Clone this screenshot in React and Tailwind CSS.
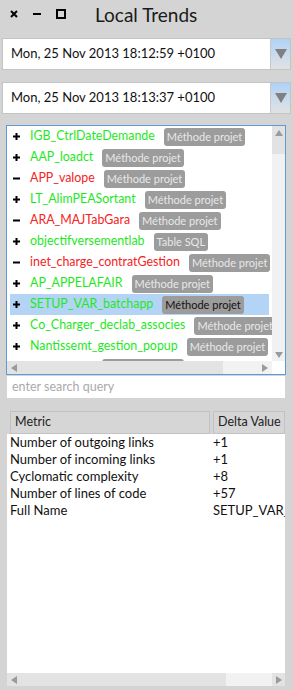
import React from "react";

const items = [
  { sign: "+", name: "IGB_CtrlDateDemande", tag: "Méthode projet" },
  { sign: "+", name: "AAP_loadct", tag: "Méthode projet" },
  { sign: "-", name: "APP_valope", tag: "Méthode projet" },
  { sign: "+", name: "LT_AlimPEASortant", tag: "Méthode projet" },
  { sign: "-", name: "ARA_MAJTabGara", tag: "Méthode projet" },
  { sign: "+", name: "objectifversementlab", tag: "Table SQL" },
  { sign: "-", name: "inet_charge_contratGestion", tag: "Méthode projet" },
  { sign: "+", name: "AP_APPELAFAIR", tag: "Méthode projet" },
  { sign: "+", name: "SETUP_VAR_batchapp", tag: "Méthode projet", selected: true },
  { sign: "+", name: "Co_Charger_declab_associes", tag: "Méthode projet" },
  { sign: "+", name: "Nantissemt_gestion_popup", tag: "Méthode projet" },
  { sign: "+", name: "DEV_valcpt", tag: "Méthode projet" },
];

const metrics = [
  ["Number of outgoing links", "+1"],
  ["Number of incoming links", "+1"],
  ["Cyclomatic complexity", "+8"],
  ["Number of lines of code", "+57"],
  ["Full Name", "SETUP_VAR_batchapp"],
];

function Sign({ kind }) {
  return (
    <svg width="7" height="7" viewBox="0 0 7 7" className="shrink-0">
      <rect x="0" y="2.5" width="7" height="2" fill="#000" />
      {kind === "+" && <rect x="2.5" y="0" width="2" height="7" fill="#000" />}
    </svg>
  );
}

function Arrow({ dir }) {
  const pts = {
    up: "0,7 4,1 8,7",
    down: "0,1 4,7 8,1",
    left: "7,0 1,4 7,8",
    right: "1,0 7,4 1,8",
  }[dir];
  return (
    <svg width="8" height="8" viewBox="0 0 8 8">
      <polygon points={pts} fill="#9a9a9a" />
    </svg>
  );
}

function Dropdown({ value }) {
  return (
    <div className="mx-[2px] w-[289px] h-[32px] flex border border-[#c4c4c4] bg-white">
      <div className="flex-1 flex items-center pl-[8px] text-[13px] text-[#111]">{value}</div>
      <div className="w-[20px] border-l border-[#c8c8c8] bg-gradient-to-b from-[#b0d2f7] to-[#e2e2e2] flex items-center justify-center">
        <svg width="12" height="10" viewBox="0 0 12 10">
          <polygon points="0,0 12,0 6,10" fill="#808080" />
        </svg>
      </div>
    </div>
  );
}

export default function App() {
  return (
    <div className="w-[293px] h-[690px] bg-[#d4d4d4] overflow-hidden font-['Lato',sans-serif]">
      <div className="h-[28px] flex items-center pl-[10px] text-[#1a1a1a]">
        <svg width="8" height="8" viewBox="0 0 8 8">
          <path d="M1 1L7 7M7 1L1 7" stroke="#000" strokeWidth="2" />
        </svg>
        <svg width="8" height="8" viewBox="0 0 8 8" className="ml-[15px]">
          <rect x="0" y="3" width="8" height="2" fill="#000" />
        </svg>
        <svg width="10" height="10" viewBox="0 0 10 10" className="ml-[15px]">
          <rect x="1" y="1" width="8" height="8" fill="none" stroke="#000" strokeWidth="2" />
        </svg>
        <span className="ml-[29px] text-[19px] leading-none">Local Trends</span>
      </div>

      <div className="mt-[10px]">
        <Dropdown value="Mon, 25 Nov 2013 18:12:59 +0100" />
      </div>
      <div className="mt-[12px]">
        <Dropdown value="Mon, 25 Nov 2013 18:13:37 +0100" />
      </div>

      <div className="mt-[11px] ml-[6px] w-[280px] h-[250px] border border-[#5b9bd8] bg-white flex flex-col">
        <div className="flex-1 flex min-h-0">
          <div className="flex-1 overflow-hidden px-[3px]">
            {items.map((it) => (
              <div
                key={it.name}
                className={`h-[21px] flex items-center whitespace-nowrap ${it.selected ? "bg-[#b4d4f6]" : ""}`}
              >
                <div className="w-[20px] shrink-0 pl-[3px] flex items-center">
                  <Sign kind={it.sign} />
                </div>
                <span
                  className={`shrink-0 text-[12.4px] ${it.sign === "+" ? "text-[#1ee81e]" : "text-[#f52222]"}`}
                >
                  {it.name}
                </span>
                <span
                  className={`shrink-0 ml-[9px] h-[18px] px-[3px] rounded-[3px] bg-[#9c9c9c] text-[11px] leading-[18px] ${it.selected ? "text-[#111]" : "text-[#e8e8e8]"}`}
                >
                  {it.tag}
                </span>
              </div>
            ))}
          </div>
          <div className="w-[13px] flex flex-col bg-[#f1f1f1]">
            <div className="h-[28px] bg-[#e2e2e2] flex justify-center pt-[3px]">
              <Arrow dir="up" />
            </div>
            <div className="flex-1" />
            <div className="h-[13px] flex justify-center items-center">
              <Arrow dir="down" />
            </div>
          </div>
        </div>
        <div className="h-[13px] flex">
          <div className="flex-1 flex bg-[#f2f2f2]">
            <div className="w-[216px] bg-[#e3e3e3] flex items-center pl-[3px]">
              <Arrow dir="left" />
            </div>
            <div className="flex-1 flex items-center justify-end pr-[3px]">
              <Arrow dir="right" />
            </div>
          </div>
          <div className="w-[13px] bg-white" />
        </div>
      </div>

      <div className="mt-[1px] ml-[7px] w-[278px] h-[22px] bg-white flex items-center pl-[5px] text-[12.5px] text-[#aaaaaa]">
        enter search query
      </div>

      <div className="mt-[13px] ml-[7px] w-[278px]">
        <div className="h-[23px] flex text-[12.5px] text-[#222]">
          <div className="ml-[3px] w-[200px] border border-[#c2c2c2] bg-[#d6d6d6] flex items-center pl-[4px]">
            Metric
          </div>
          <div className="ml-[3px] flex-1 border border-[#c2c2c2] bg-[#d6d6d6] flex items-center pl-[4px]">
            Delta Value
          </div>
        </div>
        <div className="h-[239px] bg-white overflow-hidden">
          {metrics.map(([k, v]) => (
            <div key={k} className="h-[17px] flex items-center text-[13px] text-[#111] whitespace-nowrap">
              <span className="ml-[3px] w-[203px] shrink-0">{k}</span>
              <span className="overflow-hidden w-[72px]">{v}</span>
            </div>
          ))}
        </div>
        <div className="h-[13px] flex bg-[#f2f2f2]">
          <div className="w-[219px] bg-[#e3e3e3] flex items-center pl-[3px]">
            <Arrow dir="left" />
          </div>
          <div className="flex-1" />
          <div className="w-[13px] bg-[#e3e3e3] flex items-center justify-center">
            <Arrow dir="right" />
          </div>
        </div>
      </div>
    </div>
  );
}
